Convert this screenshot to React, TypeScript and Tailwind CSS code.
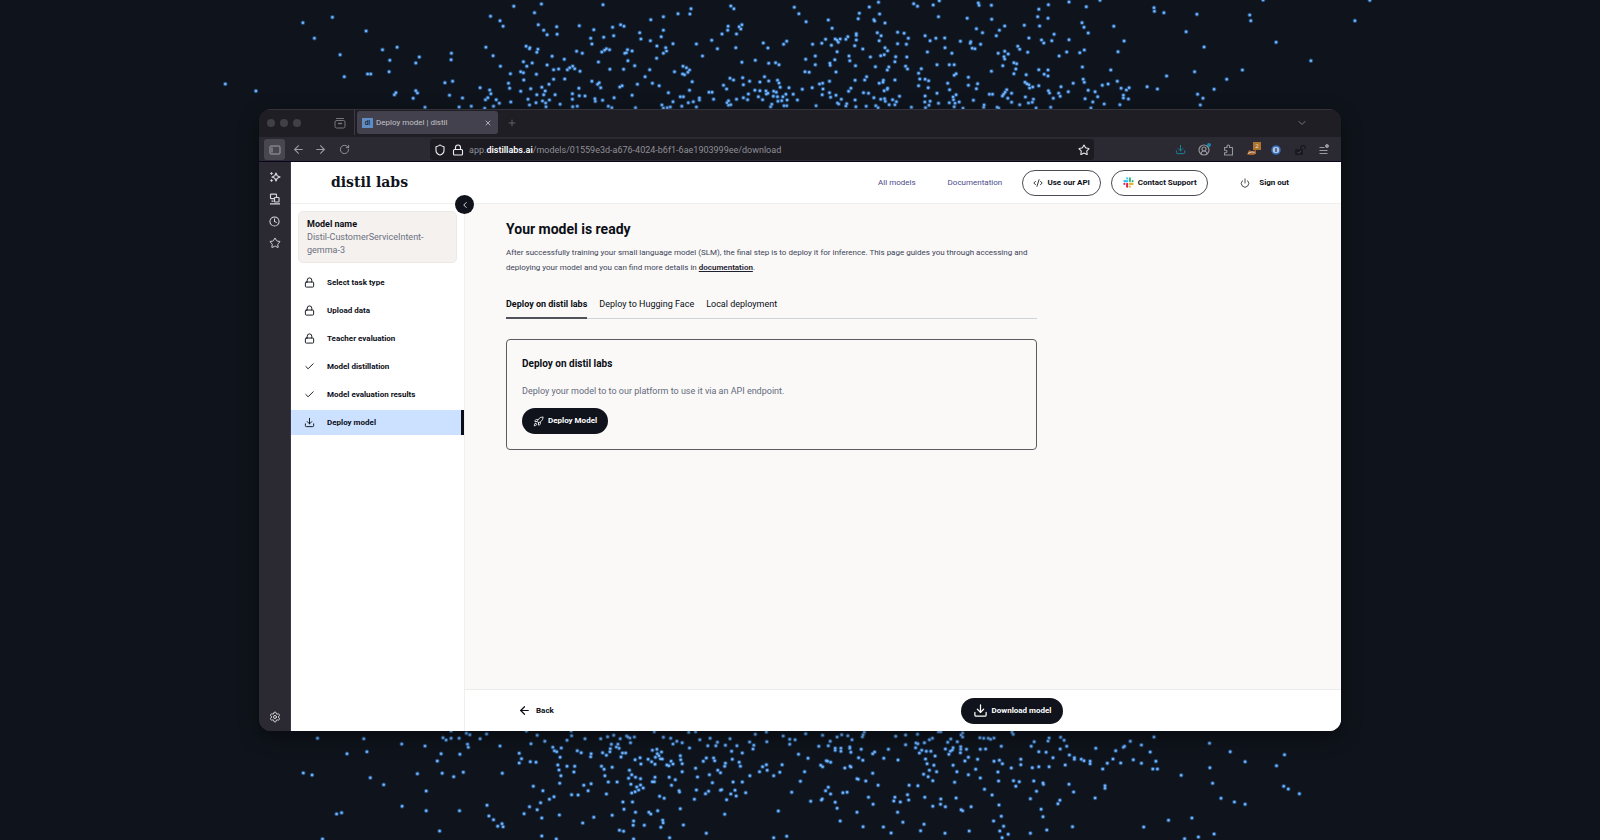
import type { ReactNode } from 'react';
import {
  ArrowLeft, ArrowRight, Check, ChevronDown, ChevronLeft, CircleUserRound, Clock, CodeXml,
  Download, Lock, Plus, Power, Rocket, RotateCw, Settings, Shield, Star, X,
} from 'lucide-react';

/* Particle positions, one string per quadrant, as "x y" pairs on a finer grid. */
const GRID_X = 0.3827;
const GRID_Y = 0.3333;

const PARTICLES = [
  {
    left: 200,
    top: 0,
    points:
      '66 252,146 273,269 68,299 115,346 52,434 93,366 164,377 230,438 222,446 222,477 149,515 142,496 181,494 215,508 284,512 278,557 295,564 272,568 279,573 171,564 189,588 322,657 160,656 179,640 248,660 244,652 286,686 294,677 321,709 319,732 263,747 142,766 167,785 199,759 49,784 62,792 79,820 19,892 12,874 38,884 74,898 91,907 104,932 80,933 103,991 77,1053 14,1029 89,1021 115,1024 132,1055 112,1081 107,1078 82,1099 74,1108 79,1149 98,1152 117,1178 59,1211 50,1249 41,1280 42,1283 26,1211 91,1205 110,1177 122,1194 138,1236 131,1217 143,1219 153,1211 160,1193 175,1129 153,1117 149,1114 158,1110 160,1118 182,1136 197,1107 208,1070 149,1062 146,1057 151,1050 156,1041 186,1071 208,999 160,984 154,952 178,920 169,883 148,880 157,862 143,852 139,861 146,845 185,868 189,854 199,838 215,845 218,811 221,846 240,879 223,907 195,924 209,937 207,960 209,966 203,974 199,979 206,993 214,953 237,924 238,912 253,893 262,864 266,838 274,806 250,809 265,812 306,757 270,760 281,752 293,746 299,774 299,782 310,767 319,744 325,880 284,902 273,898 284,928 284,913 300,895 303,903 309,878 308,857 298,861 315,904 320,941 313,973 281,991 287,1006 288,973 298,974 320,986 319,990 265,1024 244,1043 248,1039 253,1047 263,1032 296,1033 304,1052 301,1067 319,1076 323,1082 293,1097 261,1103 257,1143 253,1129 286,1138 323,1163 230,1182 250,1175 209,1200 257,1224 278,1240 215,1262 199,1271 203,1279 210,1275 217,1261 222,1266 224,1286 245,1279 271,1263 290,1255 290,1236 305,1207 315,1211 324,1221 323,1229 321,1259 319,1276 308,1289 305,1305 294,1305 300,1297 321,1330 277,1338 277,1342 298,1297 132,1313 168,1337 121,1352 146,1364 102,1380 79,1379 91,1387 18,1395 26,1416 74,1409 80,1413 87,1402 102,1400 143,1416 187,1451 181,1472 129,1484 144,1486 190,1504 188,1513 194,1525 133,1533 124,1553 22,1565 41,1385 235,1394 240,1368 256,1376 267,1418 233,1420 254,1436 244,1463 246,1475 230,1486 243,1509 241,1513 249,1516 262,1539 263,1433 282,1450 271,1463 272,1479 273,1480 282,1499 274,1506 277,1498 289,1459 290,1470 299,1420 293,1431 299,1402 298,1381 302,1377 308,1387 314,1381 316,1484 280,1509 290,1523 290,1531 283,1550 283,1534 300,1520 302,1510 304,1494 313,1491 320,1526 317,1533 317,1561 300',
  },
  {
    left: 800,
    top: 0,
    points:
      '16 65,74 60,84 85,33 133,40 168,15 178,57 130,67 118,82 136,92 117,97 121,105 117,100 127,120 118,125 110,147 101,147 106,147 120,143 137,152 56,155 40,181 21,205 7,208 42,193 59,195 63,222 69,202 98,212 107,207 122,222 143,229 152,220 164,211 167,250 170,279 171,278 133,283 115,272 100,255 97,255 131,297 11,307 19,348 15,364 2,362 50,327 107,340 122,355 115,378 114,379 143,333 156,397 160,419 124,437 55,466 9,468 16,500 16,501 58,461 86,477 98,446 125,445 130,450 145,457 146,472 133,513 107,521 91,535 78,586 76,624 28,621 50,649 14,648 55,626 78,598 114,631 120,637 129,658 122,664 103,703 6,748 20,784 1,737 68,742 82,753 99,703 119,697 156,731 158,743 150,677 168,595 157,569 139,574 148,518 160,535 154,544 162,533 170,535 177,530 197,559 188,566 191,564 207,559 221,591 224,624 209,648 210,638 223,648 228,500 214,403 194,390 194,358 194,408 221,403 226,440 232,440 256,464 251,461 266,386 250,391 269,408 284,400 291,401 299,405 310,416 306,403 320,390 308,453 301,481 315,480 322,495 283,503 283,540 269,536 277,532 283,529 288,553 280,543 295,553 307,588 247,593 251,598 254,608 261,600 264,624 257,589 291,610 298,607 307,597 309,574 314,515 322,519 324,649 272,652 279,682 260,676 280,680 289,662 295,701 275,714 250,740 238,743 247,738 201,753 271,771 275,778 290,745 296,765 306,760 324,790 256,805 252,795 312,829 244,839 265,853 270,860 263,845 286,845 294,858 297,836 314,812 210,831 155,847 123,820 79,925 23,926 34,951 38,1037 43,1009 95,1056 141,1031 215,958 228,907 260,934 267,1082 268,1115 238,1156 210,1175 45,1178 62,1244 127,1335 182,1450 62,1489 1,1210 0,1039 283,1053 295,1046 315,97 155,91 179,78 190,79 196,94 216,13 215,24 217,40 194,128 168,130 182,145 197,164 147,184 171,197 200,232 201,228 210,248 185,276 199,281 207,317 206,310 220,174 230,169 240,144 241,248 240,218 241,217 247,207 250,229 265,228 268,220 272,133 265,127 274,77 244,59 250,51 252,32 263,6 268,60 267,58 284,77 278,94 286,80 292,108 298,98 309,101 312,122 311,120 318,144 300,146 320,166 278,179 280,193 293,173 319,198 317,204 323,211 298,221 296,223 304,242 299,252 305,248 314,233 314,260 289,291 322,313 237,327 238,336 242,310 257,335 263,327 288,326 306,340 304,328 323,337 316,362 310,358 280,42 317,655 322,617 324,426 325',
  },
  {
    left: 200,
    top: 725,
    points:
      '307 40,428 41,384 86,436 80,270 144,293 150,445 158,480 179,527 57,588 63,620 108,630 86,568 146,633 145,663 155,688 142,591 198,528 244,591 257,678 257,357 267,370 263,320 342,626 318,635 38,643 45,656 40,677 40,696 25,705 29,699 58,701 67,679 88,732 41,749 27,784 63,790 145,750 241,755 273,767 284,789 296,778 304,792 305,834 85,840 101,834 114,863 110,878 112,865 56,881 31,901 49,922 67,926 77,932 80,944 69,941 97,959 46,971 32,1006 41,986 77,996 83,1022 86,1021 95,959 124,979 124,977 141,935 120,938 135,943 152,940 175,871 184,896 197,925 215,913 223,890 233,861 245,881 254,847 266,893 279,893 333,931 342,939 270,971 209,988 210,1003 181,1022 176,1014 197,1062 207,1029 277,1000 294,1077 271,1047 41,1065 35,1081 31,1098 41,1115 33,1123 39,1118 36,1125 53,1135 36,1075 58,1092 58,1088 66,1095 70,1072 71,1071 80,1052 83,1062 91,1104 84,1112 84,1100 96,1049 124,1056 133,1077 127,1058 152,1067 171,1090 171,1122 136,1128 149,1120 160,1138 157,1151 161,1126 178,1151 180,1141 186,1158 189,1146 195,1137 200,1128 204,1105 231,1130 231,1108 253,1138 262,1133 288,1132 301,1161 301,1133 342,1096 316,1107 319,1150 98,1137 104,1152 117,1171 103,1182 76,1194 73,1206 81,1195 86,1199 92,1190 97,1203 101,1180 110,1189 118,1208 102,1231 109,1236 117,1220 120,1225 122,1211 37,1230 40,1246 49,1236 57,1260 53,1279 69,1255 92,1256 104,1260 116,1260 140,1226 157,1242 164,1232 181,1189 157,1182 170,1187 170,1252 197,1253 201,1201 214,1213 220,1255 251,1196 257,1173 262,1178 267,1209 286,1210 293,1204 307,1263 300,1227 338,1277 22,1295 20,1306 44,1333 40,1327 62,1352 52,1348 62,1373 61,1385 41,1403 62,1389 79,1417 84,1436 51,1447 61,1445 72,1451 28,1480 21,1481 50,1524 33,1541 43,1555 44,1541 58,1564 88,1323 99,1315 109,1342 99,1345 107,1391 103,1373 115,1371 124,1409 112,1412 124,1353 136,1360 143,1331 149,1300 156,1295 130,1339 173,1393 171,1417 171,1297 195,1292 223,1321 206,1329 199,1360 196,1363 194,1398 196,1387 207,1401 213,1376 224,1426 203,1437 152,1462 140,1470 125,1480 119,1482 136,1499 152,1515 142,1521 119,1546 202,1511 258,1371 268,1323 325,1499 338,1533 334,1187 20,656 18,853 18,970 18',
  },
  {
    left: 800,
    top: 725,
    points:
      '15 26,59 31,79 49,74 62,49 64,21 100,97 36,109 29,125 32,136 44,92 70,92 76,107 70,107 79,130 66,130 70,133 82,160 73,153 98,164 106,163 35,165 29,168 22,190 86,195 81,231 73,219 100,256 105,190 145,131 124,133 126,117 129,69 107,72 109,80 112,54 121,59 125,12 140,1 169,28 229,58 222,56 225,67 197,74 187,80 207,92 232,97 250,112 203,123 202,149 161,152 163,172 168,204 181,179 217,191 238,149 262,105 288,165 305,218 306,238 324,269 292,255 262,245 228,248 217,262 231,284 225,281 209,285 181,308 182,326 217,347 244,368 222,367 238,380 245,408 219,404 172,421 254,425 257,447 245,324 298,315 317,379 325,442 318,250 34,276 30,307 28,276 59,303 54,308 56,325 53,338 44,346 40,302 68,318 76,312 84,330 79,342 79,353 93,328 102,332 116,350 121,338 136,357 140,323 148,335 155,347 167,386 52,394 42,411 50,425 36,421 30,425 24,362 20,368 20,380 72,400 68,398 75,393 79,389 88,420 65,420 73,419 83,435 73,440 97,431 108,400 121,410 140,440 149,459 133,464 103,470 38,480 40,492 40,498 43,507 39,485 72,471 73,526 64,554 22,557 28,507 109,521 106,529 116,517 141,519 168,471 159,482 193,502 210,520 240,526 274,506 288,532 304,522 318,544 328,528 338,552 129,577 103,577 119,558 167,573 170,564 184,611 168,635 174,636 178,618 199,602 221,630 253,635 275,645 315,602 325,612 50,604 64,624 80,643 82,651 39,648 48,681 37,690 46,697 64,680 72,661 98,607 128,624 125,651 125,693 120,704 90,717 98,717 103,735 103,742 107,758 109,758 116,773 70,703 178,715 201,679 226,674 236,712 305,771 219,797 182,797 190,791 132,803 115,818 102,838 114,825 77,845 67,848 64,863 49,892 60,915 81,925 36,871 104,892 115,930 109,922 132,934 132,1070 55,1124 80,1071 128,1163 110,1266 89,1245 122,996 151,1078 175,1100 220,1135 231,1163 238,1264 184,1276 192,1305 206,963 286,898 306,1024 279,1005 341,1041 336,1082 327',
  },
]
  .flatMap(({ left, top, points }) =>
    points.split(',').map((point) => {
      const [x, y] = point.split(' ').map(Number);
      return `M${(left + x * GRID_X).toFixed(1)} ${(top + y * GRID_Y).toFixed(1)}h.01`;
    }),
  )
  .join('');

function Particles() {
  return (
    <svg
      aria-hidden="true"
      className="pointer-events-none absolute inset-0 h-full w-full"
      viewBox="0 0 1600 840"
      preserveAspectRatio="xMidYMid slice"
      fill="none"
      strokeLinecap="round"
    >
      <path d={PARTICLES} stroke="#2f6fb5" strokeOpacity="0.6" strokeWidth="4.6" />
      <path d={PARTICLES} stroke="#74b2fa" strokeWidth="2.6" />
    </svg>
  );
}

function IconButton({ label, className = '', children }: { label: string; className?: string; children: ReactNode }) {
  return (
    <button type="button" aria-label={label} className={`flex shrink-0 items-center justify-center ${className}`}>
      {children}
    </button>
  );
}

function TabStrip() {
  return (
    <div className="flex h-7 items-center border-t border-[#34333c] bg-[#1f1e25] pb-0.5">
      <div className="flex gap-[5px] pl-2">
        <span className="size-2 rounded-full bg-[#414047]" />
        <span className="size-2 rounded-full bg-[#414047]" />
        <span className="size-2 rounded-full bg-[#414047]" />
      </div>
      <IconButton label="Recent tabs" className="ml-[31px] size-4 text-[#77767d]">
        <svg viewBox="0 0 12 12" className="size-3" fill="none" stroke="currentColor" strokeLinecap="round">
          <path d="M2.500 1.500h7" />
          <rect x="1" y="3.500" width="10" height="7.500" rx="1.500" />
          <path d="M4.500 6.500h3" strokeWidth="1.400" />
        </svg>
      </IconButton>
      <div className="ml-1.5 h-[25px] w-px bg-[#3b3a42]" />
      <div className="ml-0.5 flex h-[23px] w-[141px] items-center rounded-[3px] bg-[#42414d] pr-1 pl-[5px]">
        <span className="flex h-2.5 w-[11px] items-center justify-center bg-[#5f8dc4] font-['Inter',sans-serif] text-[6px] font-bold text-[#1b2c45]">
          dl
        </span>
        <span className="ml-[3px] flex-1 font-['Roboto',sans-serif] text-[8px] text-[#c3c3c8]">Deploy model | distil</span>
        <IconButton label="Close tab" className="size-3 text-[#c3c3c8]">
          <X size={8} strokeWidth={2.5} />
        </IconButton>
      </div>
      <IconButton label="New tab" className="ml-2 size-3 text-[#6d6c74]">
        <Plus size={10} strokeWidth={2} />
      </IconButton>
      <IconButton label="List all tabs" className="mr-[33px] ml-auto size-3 text-[#77767d]">
        <ChevronDown size={12} strokeWidth={2} />
      </IconButton>
    </div>
  );
}

function AddressBar() {
  return (
    <div className="flex h-[25px] items-center border-b border-[#0d0520] bg-[#2b2a33] pt-px pl-[5px] text-[#9b9aa1]">
      <IconButton label="Sidebar" className="size-[21px] rounded-[3px] bg-[#48474f] text-[#a09fa6]">
        <svg viewBox="0 0 12 12" className="size-3" fill="none" stroke="currentColor">
          <rect x="1" y="2" width="10" height="8" rx="1" />
          <path d="M3 3.500v5" />
        </svg>
      </IconButton>
      <IconButton label="Back" className="ml-1.5 size-3.5">
        <ArrowLeft size={13} strokeWidth={2} />
      </IconButton>
      <IconButton label="Forward" className="ml-2 size-3.5">
        <ArrowRight size={13} strokeWidth={2} />
      </IconButton>
      <IconButton label="Reload" className="ml-2.5 size-3.5">
        <RotateCw size={11} strokeWidth={2} />
      </IconButton>
      <div className="ml-[79px] flex h-[21px] min-w-0 flex-1 items-center rounded-[3px] bg-[#1c1b22] px-1">
        <Shield size={12} strokeWidth={2.2} className="shrink-0 text-[#f0f0f2]" />
        <Lock size={12} strokeWidth={2.2} className="ml-1.5 shrink-0 text-[#f0f0f2]" />
        <span className="ml-[5px] flex-1 truncate font-['Roboto',sans-serif] text-[9px] leading-4 text-[#8f8f96]">
          app.<b className="font-semibold text-[#fbfbfe]">distillabs.ai</b>/models/01559e3d-a676-4024-b6f1-6ae1903999ee/download
        </span>
        <IconButton label="Bookmark this page" className="size-3 text-[#e6e6ea]">
          <Star size={12} strokeWidth={2.2} />
        </IconButton>
      </div>
      <div className="flex items-center gap-2.5 pr-2.5 pl-[79px]">
        <IconButton label="Downloads" className="size-3.5 text-[#188aa6]">
          <Download size={11} strokeWidth={2} />
        </IconButton>
        <IconButton label="Account" className="relative size-3.5 text-[#96959c]">
          <CircleUserRound size={12} strokeWidth={2.4} />
          <span className="absolute top-0 right-0 size-1 rounded-full bg-[#1b86ad]" />
        </IconButton>
        <IconButton label="Extensions" className="size-3.5 text-[#96959c]">
          <svg viewBox="0 0 14 14" className="size-3.5" fill="none" stroke="currentColor" strokeWidth="1.100" strokeLinejoin="round">
            <path d="M3.500 4.500H6V3.300a1.300 1.300 0 0 1 2.600 0v1.200h2.900v7.500h-8V9.800h1.200a1.200 1.200 0 0 0 0-2.500H3.500z" />
          </svg>
        </IconButton>
        <IconButton label="Wallet, 2 notifications" className="relative size-3.5">
          <svg viewBox="0 0 14 14" className="size-3.5">
            <path d="M2 11.500 4 7l3 1.500 4-1.500v3.500L8.500 12H6z" fill="#a8642c" />
            <path d="M3 10.500 6 9h2.500L10 10.500" stroke="#d8d2cc" fill="none" />
          </svg>
          <span className="absolute -top-px -right-0.5 flex size-2 items-center justify-center bg-[#ad7230] text-[6px] leading-none text-[#ebd9c0]">
            2
          </span>
        </IconButton>
        <IconButton label="Password manager" className="size-3.5">
          <svg viewBox="0 0 14 14" className="size-3.5">
            <circle cx="7" cy="7" r="4.800" fill="#2f69b8" />
            <circle cx="7" cy="7" r="3.300" fill="#b4c2d8" />
            <rect x="6.300" y="4.900" width="1.400" height="4.200" rx=".5" fill="#244a80" />
          </svg>
        </IconButton>
        <IconButton label="Permissions" className="size-3.5">
          <svg viewBox="0 0 14 14" className="size-3.5">
            <rect x="2" y="6" width="8" height="6" rx="1" fill="#1a1920" />
            <path d="M8 6V4.500a2 2 0 0 1 4 0V6" stroke="#1a1920" strokeWidth="1.400" fill="none" />
            <path d="m4.500 9 1.200 1.200L8 8" stroke="#4a4952" fill="none" />
          </svg>
        </IconButton>
        <IconButton label="Menu" className="size-3.5">
          <svg viewBox="0 0 14 14" className="size-3.5" stroke="#9a99a0">
            <path d="M2.500 4.500h5M2.500 7.500h8M2.500 10.500h8" />
            <circle cx="10" cy="3" r="1.500" fill="#9a99a0" />
          </svg>
        </IconButton>
      </div>
    </div>
  );
}

function ToolRail() {
  return (
    <nav aria-label="Browser tools" className="flex w-8 flex-col items-center gap-2 border-r border-[#3b3846] bg-[#2b2a33] pt-2 text-[#d6d6da]">
      <IconButton label="Assistant" className="size-3.5">
        <svg viewBox="0 0 12 12" className="size-3" fill="none" stroke="currentColor" strokeWidth="1.200" strokeLinejoin="round">
          <path d="M7 2 8.200 4.800 11 6 8.200 7.200 7 10 5.800 7.200 3 6l2.800-1.200z" />
          <path d="M2.500 1.200v2.600M1.200 2.500h2.600M2.500 8.200v2.600M1.200 9.500h2.600" />
        </svg>
      </IconButton>
      <IconButton label="Synced tabs" className="size-3.5">
        <svg viewBox="0 0 12 12" className="size-3" fill="none" stroke="currentColor" strokeWidth="1.200">
          <rect x="1.500" y="1.200" width="6" height="4.500" rx=".6" />
          <path d="M2.500 8.200h2M1 10.800h10" />
          <rect x="5.500" y="4.500" width="4.500" height="4.500" rx=".5" fill="#2b2a33" />
        </svg>
      </IconButton>
      <IconButton label="History" className="size-3.5"><Clock size={11} strokeWidth={2.2} /></IconButton>
      <IconButton label="Bookmarks" className="size-3.5"><Star size={12} strokeWidth={2} /></IconButton>
      <IconButton label="Settings" className="mt-auto mb-[7px] size-3.5"><Settings size={12} strokeWidth={2} /></IconButton>
    </nav>
  );
}

function SlackMark() {
  return (
    <svg viewBox="0 0 12 12" className="size-[11px]" strokeWidth="2.200" strokeLinecap="round" fill="none">
      <path d="M4.500 1.500v0M1.500 4.500h3" stroke="#36c5f0" />
      <path d="M7.500 1.500v3M10.500 4.500v0" stroke="#2eb67d" />
      <path d="M7.500 7.500h3M7.500 10.500v0" stroke="#ecb22e" />
      <path d="M4.500 7.500v3M1.500 7.500v0" stroke="#e01e5a" />
    </svg>
  );
}

function PageHeader() {
  return (
    <header className="flex h-[42px] shrink-0 items-center border-b border-[#f1efed] bg-white pr-[52px] pl-10">
      <a href="#home" className="font-['DejaVu_Serif',serif] text-[14px] font-bold text-[#10131c]">distil labs</a>
      <nav className="ml-auto flex items-center text-[8px] text-[#4a4a8c]">
        <a href="#models">All models</a>
        <a href="#documentation" className="ml-8">Documentation</a>
      </nav>
      <button type="button" className="ml-5 flex h-[26px] w-[79px] items-center justify-center gap-1 rounded-full border border-[#4b4d55] text-[8px] font-bold">
        <CodeXml size={10} strokeWidth={2} />
        Use our API
      </button>
      <button type="button" className="ml-2.5 flex h-[26px] w-[97px] items-center justify-center gap-1 rounded-full border border-[#4b4d55] text-[8px] font-bold">
        <SlackMark />
        Contact Support
      </button>
      <button type="button" className="ml-8 flex items-center gap-[9px] text-[8px] font-bold">
        <Power size={10} strokeWidth={1.8} />
        Sign out
      </button>
    </header>
  );
}

const STEPS = [
  { label: 'Select task type', Icon: Lock },
  { label: 'Upload data', Icon: Lock },
  { label: 'Teacher evaluation', Icon: Lock },
  { label: 'Model distillation', Icon: Check },
  { label: 'Model evaluation results', Icon: Check },
  { label: 'Deploy model', Icon: Download, active: true },
];

function StepSidebar() {
  return (
    <aside className="relative w-[174px] shrink-0 border-r border-[#f1efed] bg-white">
      <button
        type="button"
        aria-label="Collapse sidebar"
        className="absolute -top-[9px] -right-2.5 z-10 flex size-[19px] items-center justify-center rounded-full bg-[#10131c] text-white"
      >
        <ChevronLeft size={10} strokeWidth={2} />
      </button>
      <div className="mx-[7px] mt-[7px] rounded-[5px] border border-[#ece8e5] bg-[#f5f1ee] pt-1.5 pb-[5px] pl-2 text-[9px] leading-[13px]">
        <div className="font-bold">Model name</div>
        <div className="text-[#6b7080]">Distil-CustomerServiceIntent-<br />gemma-3</div>
      </div>
      <ul className="mt-[7px] flex flex-col gap-[3px]">
        {STEPS.map(({ label, Icon, active }) => (
          <li key={label}>
            <a
              href="#step"
              aria-current={active ? 'step' : undefined}
              className={`flex h-[25px] items-center gap-3 pl-[13px] text-[8px] font-bold ${active ? 'border-r-[3px] border-[#0b0e16] bg-[#cbe1ff]' : ''}`}
            >
              <Icon size={11} strokeWidth={2} />
              {label}
            </a>
          </li>
        ))}
      </ul>
    </aside>
  );
}

function DeployPage() {
  return (
    <main className="flex min-w-0 flex-1 flex-col bg-[#faf9f7]">
      <div className="flex-1 px-[41px] pt-[15px]">
        <div className="max-w-[531px]">
          <h1 className="text-[14px] leading-5 font-bold">Your model is ready</h1>
          <p className="mt-1.5 text-[8px] leading-[15px] text-[#3b4358]">
            After successfully training your small language model (SLM), the final step is to deploy it for inference. This page guides you through accessing and
            deploying your model and you can find more details in{' '}
            <a href="#documentation" className="font-semibold text-[#1c2130] underline">documentation</a>.
          </p>
          <div role="tablist" className="mt-[21px] flex gap-3 border-b border-[#cdd3d9] text-[9px] leading-4">
            <button type="button" role="tab" aria-selected="true" className="-mb-px border-b-2 border-[#50525a] pb-[5px] font-bold">Deploy on distil labs</button>
            <button type="button" role="tab" aria-selected="false" className="pb-1.5">Deploy to Hugging Face</button>
            <button type="button" role="tab" aria-selected="false" className="pb-1.5">Local deployment</button>
          </div>
          <section className="mt-5 rounded border border-[#5c5d63] px-[15px] pt-4 pb-[15px]">
            <h2 className="text-[10px] leading-4 font-bold">Deploy on distil labs</h2>
            <p className="mt-[11px] text-[9px] leading-4 text-[#646a7d]">Deploy your model to to our platform to use it via an API endpoint.</p>
            <button type="button" className="mt-[9px] flex h-[26px] items-center gap-1 rounded-full bg-[#10131c] px-[11px] text-[8px] font-bold text-white">
              <Rocket size={11} strokeWidth={1.8} />
              Deploy Model
            </button>
          </section>
        </div>
      </div>
      <footer className="flex h-[42px] shrink-0 items-center border-t border-[#eeecea] bg-white pl-[53px]">
        <button type="button" className="flex items-center gap-[5px] text-[8px] font-bold">
          <ArrowLeft size={13} strokeWidth={2.2} />
          Back
        </button>
        <button type="button" className="mr-[278px] ml-auto flex h-[26px] w-[102px] items-center justify-center gap-1 rounded-full bg-[#10131c] text-[8px] font-bold text-white">
          <Download size={15} strokeWidth={2} />
          Download model
        </button>
      </footer>
    </main>
  );
}

export default function App() {
  return (
    <div className="relative flex min-h-screen justify-center overflow-hidden bg-[#0f141c] py-[109px]">
      <Particles />
      <div className="relative flex w-[67.625%] min-w-[960px] flex-col overflow-hidden rounded-xl bg-[#2b2a33] shadow-[0_6px_20px_rgba(0,0,0,0.45)]">
        <TabStrip />
        <AddressBar />
        <div className="flex flex-1">
          <ToolRail />
          <div className="flex min-w-0 flex-1 flex-col font-['Roboto',sans-serif] text-[#0b0e16]">
            <PageHeader />
            <div className="flex flex-1">
              <StepSidebar />
              <DeployPage />
            </div>
          </div>
        </div>
      </div>
    </div>
  );
}
